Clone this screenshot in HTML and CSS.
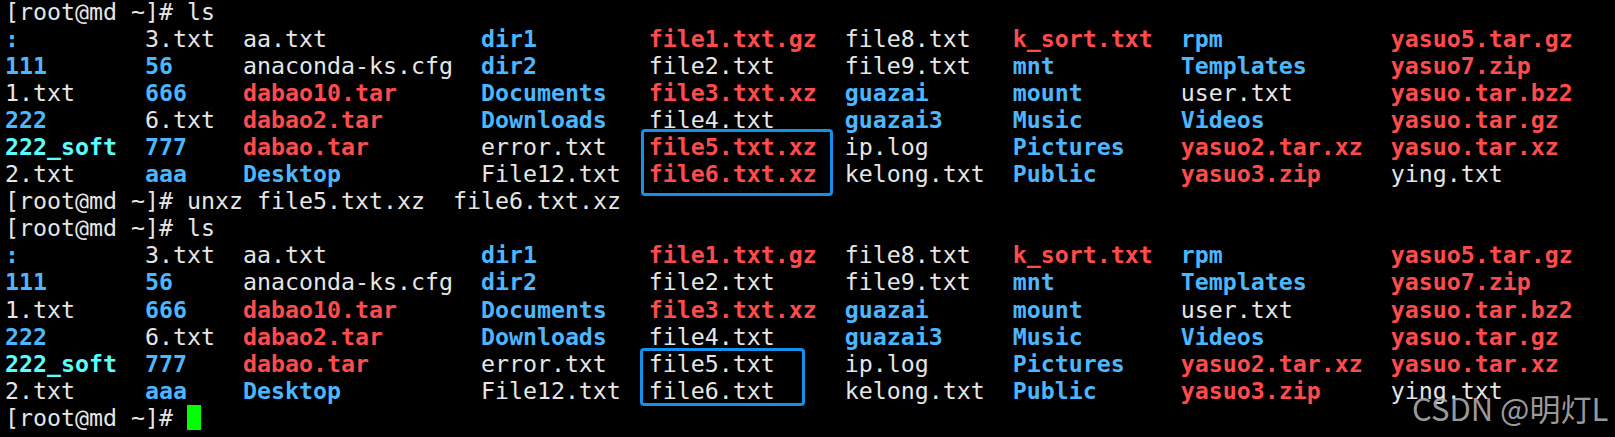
FILE: index.html
```html
<!DOCTYPE html>
<html>
<head>
<meta charset="utf-8">
<link rel="stylesheet" href="styles.css">
</head>
<body>
<div class="term">
  <div class="line">[root@md ~]# ls</div>
  <div class="ls">
    <span class="d">:</span><span>3.txt</span><span>aa.txt</span><span class="d">dir1</span><span class="r">file1.txt.gz</span><span>file8.txt</span><span class="r">k_sort.txt</span><span class="d">rpm</span><span class="r">yasuo5.tar.gz</span>
    <span class="d">111</span><span class="d">56</span><span>anaconda-ks.cfg</span><span class="d">dir2</span><span>file2.txt</span><span>file9.txt</span><span class="d">mnt</span><span class="d">Templates</span><span class="r">yasuo7.zip</span>
    <span>1.txt</span><span class="d">666</span><span class="r">dabao10.tar</span><span class="d">Documents</span><span class="r">file3.txt.xz</span><span class="d">guazai</span><span class="d">mount</span><span>user.txt</span><span class="r">yasuo.tar.bz2</span>
    <span class="d">222</span><span>6.txt</span><span class="r">dabao2.tar</span><span class="d">Downloads</span><span>file4.txt</span><span class="d">guazai3</span><span class="d">Music</span><span class="d">Videos</span><span class="r">yasuo.tar.gz</span>
    <span class="c">222_soft</span><span class="d">777</span><span class="r">dabao.tar</span><span>error.txt</span><span class="r">file5.txt.xz</span><span>ip.log</span><span class="d">Pictures</span><span class="r">yasuo2.tar.xz</span><span class="r">yasuo.tar.xz</span>
    <span>2.txt</span><span class="d">aaa</span><span class="d">Desktop</span><span>File12.txt</span><span class="r">file6.txt.xz</span><span>kelong.txt</span><span class="d">Public</span><span class="r">yasuo3.zip</span><span>ying.txt</span>
  </div>
  <div class="line">[root@md ~]# unxz file5.txt.xz  file6.txt.xz</div>
  <div class="line">[root@md ~]# ls</div>
  <div class="ls">
    <span class="d">:</span><span>3.txt</span><span>aa.txt</span><span class="d">dir1</span><span class="r">file1.txt.gz</span><span>file8.txt</span><span class="r">k_sort.txt</span><span class="d">rpm</span><span class="r">yasuo5.tar.gz</span>
    <span class="d">111</span><span class="d">56</span><span>anaconda-ks.cfg</span><span class="d">dir2</span><span>file2.txt</span><span>file9.txt</span><span class="d">mnt</span><span class="d">Templates</span><span class="r">yasuo7.zip</span>
    <span>1.txt</span><span class="d">666</span><span class="r">dabao10.tar</span><span class="d">Documents</span><span class="r">file3.txt.xz</span><span class="d">guazai</span><span class="d">mount</span><span>user.txt</span><span class="r">yasuo.tar.bz2</span>
    <span class="d">222</span><span>6.txt</span><span class="r">dabao2.tar</span><span class="d">Downloads</span><span>file4.txt</span><span class="d">guazai3</span><span class="d">Music</span><span class="d">Videos</span><span class="r">yasuo.tar.gz</span>
    <span class="c">222_soft</span><span class="d">777</span><span class="r">dabao.tar</span><span>error.txt</span><span>file5.txt</span><span>ip.log</span><span class="d">Pictures</span><span class="r">yasuo2.tar.xz</span><span class="r">yasuo.tar.xz</span>
    <span>2.txt</span><span class="d">aaa</span><span class="d">Desktop</span><span>File12.txt</span><span>file6.txt</span><span>kelong.txt</span><span class="d">Public</span><span class="r">yasuo3.zip</span><span>ying.txt</span>
  </div>
  <div class="line">[root@md ~]# <span class="cursor"></span></div>
  <div class="box box1"></div>
  <div class="box box2"></div>
</div>
<div class="watermark">CSDN @明灯L</div>
</body>
</html>
```

FILE: styles.css
```css
html, body {
  margin: 0;
  padding: 0;
  background: #000;
  overflow: hidden;
}
body {
  width: 1615px;
  height: 437px;
  position: relative;
}
.term {
  position: relative;
  margin-top: -2.5px;
  padding-left: 5px;
  font-family: "DejaVu Sans Mono", monospace;
  font-size: 23.25px;
  line-height: 27.1px;
  color: #e6e6e6;
}
.line {
  white-space: pre;
  height: 27.1px;
}
.ls {
  display: grid;
  grid-template-columns: 10ch 7ch 17ch 12ch 14ch 12ch 12ch 15ch auto;
  grid-auto-rows: 27.1px;
}
.ls span {
  white-space: pre;
}
.d { color: #4cb6ff; font-weight: bold; }
.r { color: #ff4b4b; font-weight: bold; }
.c { color: #5affff; font-weight: bold; }
.cursor {
  display: inline-block;
  width: 14px;
  height: 25px;
  background: #00ff00;
  vertical-align: -4px;
}
.box {
  position: absolute;
  border: 3px solid #1290ea;
  border-radius: 4px;
  box-sizing: border-box;
}
.box1 { left: 641px; top: 131px; width: 192px; height: 67px; }
.box2 { left: 640px; top: 350px; width: 165px; height: 58px; }
.watermark {
  position: absolute;
  left: 1412px;
  top: 388px;
  font-family: "Noto Sans CJK SC", sans-serif;
  font-size: 31px;
  line-height: 40px;
  color: rgba(175, 175, 175, 0.9);
  white-space: nowrap;
}
```
